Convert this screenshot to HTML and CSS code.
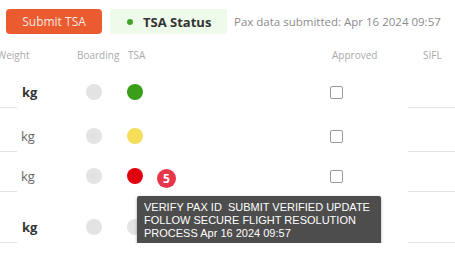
FILE: index.html
```html
<!DOCTYPE html>
<html lang="en">
<head>
<meta charset="utf-8">
<link rel="stylesheet" href="styles.css">
</head>
<body>
<div class="page">
  <div class="topbar">
    <button class="btn-submit">Submit TSA</button>
    <div class="status"><span class="status-dot"></span>TSA Status</div>
    <div class="submitted">Pax data submitted: Apr 16 2024 09:57</div>
  </div>

  <div class="thead">
    <div class="c1 h-weight">Weight</div>
    <div class="c2">Boarding</div>
    <div class="c3 h-tsa">TSA</div>
    <div class="c4 h-approved">Approved</div>
    <div class="c5 h-sifl">SIFL</div>
  </div>

  <div class="row row-1">
    <div class="c1 weight"><span class="field"></span><span class="unit bold">kg</span></div>
    <div class="c2 cell"><span class="dot gray"></span></div>
    <div class="c3 cell"><span class="dot green"></span></div>
    <div class="c4 cell"><span class="checkbox"></span></div>
    <div class="c5 field"></div>
  </div>
  <div class="row row-2">
    <div class="c1 weight"><span class="field"></span><span class="unit">kg</span></div>
    <div class="c2 cell"><span class="dot gray"></span></div>
    <div class="c3 cell"><span class="dot yellow"></span></div>
    <div class="c4 cell"><span class="checkbox"></span></div>
    <div class="c5 field"></div>
  </div>
  <div class="row row-3">
    <div class="c1 weight"><span class="field"></span><span class="unit">kg</span></div>
    <div class="c2 cell"><span class="dot gray"></span></div>
    <div class="c3 cell tsa-cell">
      <span class="dot red"></span>
      <span class="badge">5</span>
      <div class="tooltip">VERIFY PAX ID&nbsp; SUBMIT VERIFIED UPDATE<br>FOLLOW SECURE FLIGHT RESOLUTION<br>PROCESS Apr 16 2024 09:57</div>
    </div>
    <div class="c4 cell"><span class="checkbox"></span></div>
    <div class="c5 field"></div>
  </div>
  <div class="row row-4">
    <div class="c1 weight"><span class="field"></span><span class="unit bold">kg</span></div>
    <div class="c2 cell"><span class="dot gray"></span></div>
    <div class="c3 cell"><span class="dot gray"></span></div>
    <div class="c4 cell"></div>
    <div class="c5 field"></div>
  </div>
</div>
</body>
</html>
```

FILE: styles.css
```css
* { box-sizing: border-box; }
html, body {
  margin: 0;
  padding: 0;
  background: #fff;
  overflow: hidden;
}
body {
  font-family: "Open Sans", "Liberation Sans", sans-serif;
  color: #333;
  width: 455px;
  height: 253px;
}
.page {
  width: 455px;
  overflow: hidden;
}

/* top bar */
.topbar {
  display: flex;
  align-items: center;
  padding: 9px 0 0 6px;
  height: 34px;
}
.btn-submit {
  width: 96px;
  height: 25px;
  border: none;
  border-radius: 4px;
  background: #ea5b2f;
  color: rgba(255, 255, 255, 0.88);
  font-family: "Open Sans", sans-serif;
  font-size: 12px;
  padding: 0;
  line-height: 25px;
}
.status {
  margin-left: 8px;
  width: 117px;
  height: 25px;
  background: #effbea;
  border-radius: 2px;
  display: flex;
  align-items: center;
  padding-left: 17px;
  font-weight: 700;
  font-size: 13px;
  color: #333;
}
.status-dot {
  width: 6px;
  height: 6px;
  border-radius: 50%;
  background: #3fa526;
  margin-right: 10px;
}
.submitted {
  margin-left: 7px;
  font-size: 11.5px;
  color: #8c8c8c;
  white-space: nowrap;
}

/* table */
.thead, .row {
  display: grid;
  grid-template-columns: 77px 50px 202px 79px 47px;
}
.thead {
  margin-top: 14px;
  height: 14px;
  line-height: 14px;
  font-size: 10px;
  color: #aaa;
}
.h-weight { margin-left: -3px; }
.h-tsa { padding-left: 1px; }
.h-approved { padding-left: 3px; }
.h-sifl { padding-left: 15px; }

.row { align-items: end; }
.row-1 { height: 46px; }
.row-2 { height: 44px; }
.row-3 { height: 40px; }
.row-4 { height: 51px; }

.field {
  align-self: stretch;
  border-bottom: 1px solid #e4e4e4;
}
.weight {
  align-self: stretch;
  display: flex;
  align-items: flex-end;
}
.weight .field { width: 17px; }
.unit {
  margin-left: 4px;
  margin-bottom: 8px;
  height: 16px;
  line-height: 16px;
  font-size: 13px;
  color: #666;
}
.unit.bold { font-weight: 700; color: #333; margin-left: 5px; }

.cell {
  display: flex;
  align-items: center;
  height: 16px;
  margin-bottom: 8px;
}
.c2.cell { padding-left: 9px; }
.c4.cell { padding-left: 1px; }

.dot {
  width: 16px;
  height: 16px;
  border-radius: 50%;
  flex: none;
}
.dot.gray { background: #e3e3e3; }
.dot.green { background: #3a9e1a; }
.dot.yellow { background: #f6dd5a; }
.dot.red { background: #e0000e; }

.checkbox {
  width: 13px;
  height: 13px;
  border: 1px solid #9a9a9a;
  border-radius: 2px;
  background: #fff;
}

.tsa-cell { position: relative; }
.badge {
  position: relative;
  top: 2px;
  margin-left: 14px;
  width: 19px;
  height: 19px;
  border-radius: 50%;
  background: #e5364b;
  color: #fff;
  font-weight: 700;
  font-size: 12px;
  line-height: 19px;
  text-align: center;
}
.tooltip {
  position: absolute;
  left: 10px;
  top: 28px;
  width: 244px;
  height: 48px;
  padding: 5px 0 0 7px;
  background: #4d4d4d;
  border-radius: 2px;
  box-shadow: 0 1px 3px rgba(0, 0, 0, 0.35);
  color: #fff;
  font-family: "Liberation Sans", Arial, sans-serif;
  font-size: 11px;
  line-height: 13px;
  white-space: nowrap;
  z-index: 10;
}
```
